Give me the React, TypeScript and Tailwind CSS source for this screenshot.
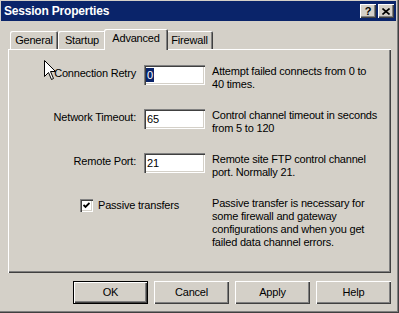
const raised =
  "shadow-[inset_1px_1px_0_#ffffff,inset_-1px_-1px_0_#404040,inset_-2px_-2px_0_#808080]";
const sunken =
  "shadow-[inset_1px_1px_0_#808080,inset_2px_2px_0_#404040,inset_-1px_-1px_0_#ffffff,inset_-2px_-2px_0_#d4d0c8]";

function Tab({ label, active, w }: { label: string; active?: boolean; w: string }) {
  if (active) {
    return (
      <div
        className={`relative z-10 -mx-[2px] -mb-[1px] flex h-[21px] ${w} items-center justify-center rounded-t-[2px] bg-[#d4d0c8] pb-[2px] shadow-[inset_1px_1px_0_#ffffff,inset_-1px_0_0_#404040,inset_-2px_0_0_#808080]`}
      >
        {label}
      </div>
    );
  }
  return (
    <div
      className={`flex h-[18px] ${w} items-center justify-center rounded-t-[2px] pt-[1px] shadow-[inset_1px_1px_0_#ffffff,inset_-1px_0_0_#404040,inset_-2px_0_0_#808080]`}
    >
      {label}
    </div>
  );
}

function Field({
  label,
  value,
  selected,
  desc,
}: {
  label: string;
  value: string;
  selected?: boolean;
  desc: string[];
}) {
  return (
    <div className="grid h-[44px] grid-cols-[129px_61px_1fr] items-start gap-x-[7px]">
      <div className="pr-[1px] text-right leading-[16px]">{label}</div>
      <div className={`flex h-[20px] items-center bg-white pl-[2px] ${sunken}`}>
        {selected ? (
          <span className="inline-block h-[14px] bg-[#0a246a] px-[1px] leading-[14px] text-white">
            {value}
          </span>
        ) : (
          <span className="pl-[1px] leading-[20px]">{value}</span>
        )}
      </div>
      <div className="whitespace-nowrap leading-[13px]">
        {desc.map((d) => (
          <div key={d}>{d}</div>
        ))}
      </div>
    </div>
  );
}

function Button({ label, isDefault }: { label: string; isDefault?: boolean }) {
  return (
    <div
      className={`flex h-[23px] w-[75px] items-center justify-center ${
        isDefault ? "border border-black" : ""
      } ${raised}`}
    >
      {label}
    </div>
  );
}

export default function App() {
  return (
    <div className="relative flex h-[313px] w-[399px] flex-col overflow-hidden bg-[#d4d0c8] pl-[1px] pr-[3px] pt-[1px] font-[family-name:'Liberation_Sans',Arial,sans-serif] text-[11px] tracking-[-0.2px] text-black shadow-[inset_-1px_-1px_0_#404040,inset_-2px_-2px_0_#808080]">
      {/* title bar */}
      <div className="flex h-[20px] items-center justify-between bg-[#0a246a] pl-[3px] pr-[2px]">
        <span className="text-[12px] font-bold text-white">Session Properties</span>
        <div className="flex gap-[2px]">
          <div
            className={`flex h-[14px] w-[16px] items-center justify-center bg-[#d4d0c8] text-[11px] font-bold leading-none ${raised}`}
          >
            ?
          </div>
          <div className={`flex h-[14px] w-[16px] items-center justify-center bg-[#d4d0c8] ${raised}`}>
            <svg width="8" height="7" viewBox="0 0 8 7">
              <path d="M0.5 0.5 L7.5 6.5 M7.5 0.5 L0.5 6.5" stroke="#000" strokeWidth="1.6" />
            </svg>
          </div>
        </div>
      </div>

      {/* tabs */}
      <div className="ml-[7px] mt-[8px] flex h-[20px] items-end pl-[2px]">
        <Tab label="General" w="w-[48px]" />
        <Tab label="Startup" w="w-[48px]" />
        <Tab label="Advanced" w="w-[64px]" active />
        <Tab label="Firewall" w="w-[47px]" />
      </div>

      {/* panel */}
      <div className={`ml-[7px] flex h-[224px] w-[383px] flex-col pt-[16px] ${raised}`}>
        <Field
          label="Connection Retry"
          value="0"
          selected
          desc={["Attempt failed connects from 0 to", "40 times."]}
        />
        <Field
          label="Network Timeout:"
          value="65"
          desc={["Control channel timeout in seconds", "from 5 to 120"]}
        />
        <Field
          label="Remote Port:"
          value="21"
          desc={["Remote site FTP control channel", "port. Normally 21."]}
        />
        <div className="grid grid-cols-[129px_61px_1fr] items-start gap-x-[7px]">
          <div className="col-span-2 flex items-start pl-[72px] pt-[2px]">
            <div className={`flex h-[13px] w-[13px] shrink-0 items-center justify-center bg-white ${sunken}`}>
              <svg width="7" height="7" viewBox="0 0 7 7">
                <path d="M0.5 3 L2.5 5 L6.5 1" stroke="#000" strokeWidth="1.8" fill="none" />
              </svg>
            </div>
            <span className="ml-[5px] leading-[13px]">Passive transfers</span>
          </div>
          <div className="whitespace-nowrap leading-[13px]">
            <div>Passive transfer is necessary for</div>
            <div>some firewall and gateway</div>
            <div>configurations and when you get</div>
            <div>failed data channel errors.</div>
          </div>
        </div>
      </div>

      {/* buttons */}
      <div className="ml-[72px] mt-[8px] flex gap-[6px]">
        <Button label="OK" isDefault />
        <Button label="Cancel" />
        <Button label="Apply" />
        <Button label="Help" />
      </div>

      {/* mouse pointer */}
      <svg className="absolute left-[44px] top-[60px]" width="13" height="20" viewBox="0 0 13 20">
        <path
          d="M0.5 0.5 L0.5 16.5 L4.5 12.5 L7.5 19.5 L9.5 18.5 L6.5 11.5 L11.5 11.5 Z"
          fill="#fff"
          stroke="#000"
          strokeWidth="1"
        />
      </svg>
    </div>
  );
}
